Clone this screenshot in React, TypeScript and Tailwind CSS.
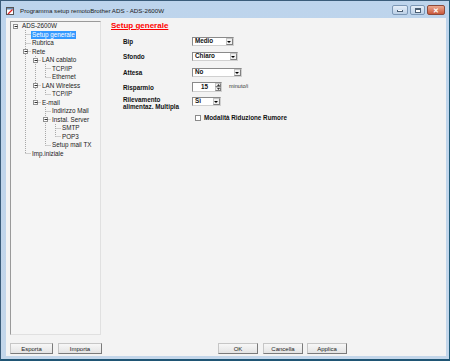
import React from 'react';

type TreeNode = { label: string; level: number; expander?: boolean; selected?: boolean };

const nodes: TreeNode[] = [
  { label: 'ADS-2600W', level: 0, expander: true },
  { label: 'Setup generale', level: 1, selected: true },
  { label: 'Rubrica', level: 1 },
  { label: 'Rete', level: 1, expander: true },
  { label: 'LAN cablato', level: 2, expander: true },
  { label: 'TCP/IP', level: 3 },
  { label: 'Ethernet', level: 3 },
  { label: 'LAN Wireless', level: 2, expander: true },
  { label: 'TCP/IP', level: 3 },
  { label: 'E-mail', level: 2, expander: true },
  { label: 'Indirizzo Mail', level: 3 },
  { label: 'Instal. Server', level: 3, expander: true },
  { label: 'SMTP', level: 4 },
  { label: 'POP3', level: 4 },
  { label: 'Setup mail TX', level: 3 },
  { label: 'Imp.iniziale', level: 1 },
];

// level, first child row, last child row
const groups: [number, number, number][] = [
  [1, 1, 15],
  [2, 4, 9],
  [3, 5, 6],
  [3, 8, 8],
  [3, 10, 14],
  [4, 12, 13],
];

const ROW = 8.5;
const colX = (l: number) => 4.5 + 10 * l;
const rowY = (i: number) => Math.floor(ROW * i + ROW / 2) + 0.5;

const indent = ['pl-[10px]', 'pl-[20px]', 'pl-[30px]', 'pl-[40px]', 'pl-[50px]'];

const TreeLines = () => (
  <svg className="absolute left-0 top-0" width="90" height="140">
    {groups.map(([l, a, b], k) => (
      <line key={'v' + k} x1={colX(l)} x2={colX(l)} y1={Math.floor(ROW * a)} y2={rowY(b)} stroke="#a8a8a8" strokeDasharray="1 1" />
    ))}
    {nodes.map((n, i) =>
      n.level > 0 ? (
        <line key={'h' + i} x1={colX(n.level)} x2={colX(n.level) + 5} y1={rowY(i)} y2={rowY(i)} stroke="#a8a8a8" strokeDasharray="1 1" />
      ) : null
    )}
    {nodes.map((n, i) =>
      n.expander ? (
        <g key={'e' + i}>
          <rect x={colX(n.level) - 2} y={rowY(i) - 2} width="4" height="4" fill="#fff" stroke="#919191" />
          <line x1={colX(n.level) - 1} x2={colX(n.level) + 2} y1={rowY(i)} y2={rowY(i)} stroke="#303030" />
        </g>
      ) : null
    )}
  </svg>
);

const Select = ({ value, w }: { value: string; w: string }) => (
  <div className={`${w} h-[9px] bg-white border border-[#8a8a8a] border-b-[#d0d0d0] border-r-[#d0d0d0] flex items-center`}>
    <span className="flex-1 pl-[2px] text-[6.3px] font-bold leading-none text-[#111]">{value}</span>
    <span className="w-[7px] h-[7px] mr-[0.5px] bg-[#f0f0f0] border border-[#c4c4c4] border-r-[#808080] border-b-[#808080] flex items-center justify-center">
      <svg width="4" height="2" viewBox="0 0 4 2">
        <path d="M0 0H4L2 2Z" fill="#000" />
      </svg>
    </span>
  </div>
);

const Btn = ({ label, cls }: { label: string; cls: string }) => (
  <div className={`${cls} h-[11px] flex items-center justify-center bg-gradient-to-b from-[#f7f7f7] to-[#e4e4e4] border border-[#c6c6c6] border-r-[#7a7a7a] border-b-[#7a7a7a] text-[6px] text-[#222] leading-none`}>
    {label}
  </div>
);

const Label = ({ children }: { children: React.ReactNode }) => (
  <div className="ml-[12px] w-[69px] text-[6.3px] font-bold leading-[7px] text-[#111]">{children}</div>
);

export default function App() {
  return (
    <div
      className="w-[450px] h-[361px] flex flex-col bg-gradient-to-b from-[#bdd4ec] to-[#c3d6ea] border border-[#3a5c7a] border-b-2 border-b-[#1f5574] border-r-[#1f5a77]"
      style={{ fontFamily: '"Liberation Sans", Arial, sans-serif' }}
    >
      {/* title bar */}
      <div className="h-[17px] flex items-start shrink-0">
        <svg className="ml-[5px] mt-[6px]" width="8" height="8" viewBox="0 0 8 8">
          <rect x="0.5" y="0.5" width="7" height="7" fill="#fff" stroke="#555" />
          <rect x="1" y="1" width="6" height="1.5" fill="#6d8fb5" />
          <line x1="2" y1="7" x2="6.5" y2="2.5" stroke="#e02020" strokeWidth="1.2" />
        </svg>
        <div className="ml-[6px] mt-[5px] text-[6.2px] leading-[9px] text-[#1b1b1b]">Programma setup remotoBrother ADS - ADS-2600W</div>
        <div className="ml-auto mr-[4px] mt-[4px] flex gap-[2px]">
          <div className="w-[16px] h-[10px] rounded-[2px] border border-[#7d98b6] bg-gradient-to-b from-[#e4eef9] to-[#bcd0e6] flex items-end justify-center pb-[2px]">
            <div className="w-[6px] h-[2px] bg-white border border-[#4b5f74] border-t-0" />
          </div>
          <div className="w-[15px] h-[10px] rounded-[2px] border border-[#7d98b6] bg-gradient-to-b from-[#e4eef9] to-[#bcd0e6] flex items-center justify-center">
            <div className="w-[6px] h-[5px] border border-[#4b5f74] border-t-2 bg-white" />
          </div>
          <div className="w-[18px] h-[10px] rounded-[2px] border border-[#8c4a3a] bg-gradient-to-b from-[#eba78f] to-[#c9583b] flex items-center justify-center text-white text-[7px] font-bold leading-none">
            ✕
          </div>
        </div>
      </div>

      {/* client */}
      <div className="flex-1 ml-[5px] mr-[3px] mb-[3px] bg-[#f3f3f3] flex flex-col">
        <div className="flex items-start pt-[3px] pl-[4px]">
          <div className="w-[91px] h-[314px] border border-[#9a9a9a] border-r-[#e0e0e0] border-b-[#e0e0e0] bg-[#f5f5f5]">
            <div className="relative">
              <TreeLines />
              {nodes.map((n, i) => (
                <div key={i} className={`h-[8.5px] flex items-center ${indent[n.level]}`}>
                  <span
                    className={`px-[1px] text-[6.3px] leading-[8px] whitespace-nowrap ${
                      n.selected ? 'bg-[#3399ff] text-white' : 'text-[#222]'
                    }`}
                  >
                    {n.label}
                  </span>
                </div>
              ))}
            </div>
          </div>

          <div className="ml-[10px] w-[330px] flex flex-col">
            <div className="h-[9px] leading-[9px] text-[8px] font-bold text-[#ff0000] underline">Setup generale</div>

            <div className="mt-[7px] h-[9px] flex items-center">
              <Label>Bip</Label>
              <Select value="Medio" w="w-[42px]" />
            </div>
            <div className="mt-[6px] h-[9px] flex items-center">
              <Label>Sfondo</Label>
              <Select value="Chiaro" w="w-[46px]" />
            </div>
            <div className="mt-[7px] h-[9px] flex items-center">
              <Label>Attesa</Label>
              <Select value="No" w="w-[50px]" />
            </div>
            <div className="mt-[5px] h-[10px] flex items-center">
              <Label>Risparmio</Label>
              <div className="w-[30px] h-[10px] bg-white border border-[#8a8a8a] border-b-[#d0d0d0] border-r-[#d0d0d0] flex items-center">
                <span className="flex-1 pl-[8px] text-[6.3px] font-bold leading-none text-[#111]">15</span>
                <div className="w-[6px] h-[8px] flex flex-col">
                  <div className="flex-1 bg-[#efefef] border border-[#c4c4c4] border-r-[#808080] border-b-[#808080] flex items-center justify-center">
                    <svg width="3" height="2" viewBox="0 0 3 2"><path d="M0 2H3L1.5 0Z" fill="#333" /></svg>
                  </div>
                  <div className="flex-1 bg-[#efefef] border border-[#c4c4c4] border-r-[#808080] border-b-[#808080] flex items-center justify-center">
                    <svg width="3" height="2" viewBox="0 0 3 2"><path d="M0 0H3L1.5 2Z" fill="#333" /></svg>
                  </div>
                </div>
              </div>
              <span className="ml-[7px] text-[5.5px] leading-none text-[#333]">minuto/i</span>
            </div>
            <div className="mt-[4px] h-[14px] flex items-start">
              <Label>
                Rilevamento
                <br />
                alimentaz. Multipla
              </Label>
              <div className="mt-[1px]">
                <Select value="Sì" w="w-[29px]" />
              </div>
            </div>
            <div className="mt-[5px] h-[6px] flex items-center ml-[84px]">
              <div className="w-[6px] h-[6px] bg-white border border-[#8a8a8a]" />
              <span className="ml-[3px] text-[6.3px] font-bold leading-none text-[#111]">Modalità Riduzione Rumore</span>
            </div>
          </div>
        </div>

        <div className="mt-[8px] flex">
          <Btn label="Esporta" cls="ml-[4px] w-[43px]" />
          <Btn label="Importa" cls="ml-[5px] w-[44px]" />
          <Btn label="OK" cls="ml-[116px] w-[40px]" />
          <Btn label="Cancella" cls="ml-[5px] w-[40px]" />
          <Btn label="Applica" cls="ml-[4px] w-[40px]" />
        </div>
      </div>
    </div>
  );
}
